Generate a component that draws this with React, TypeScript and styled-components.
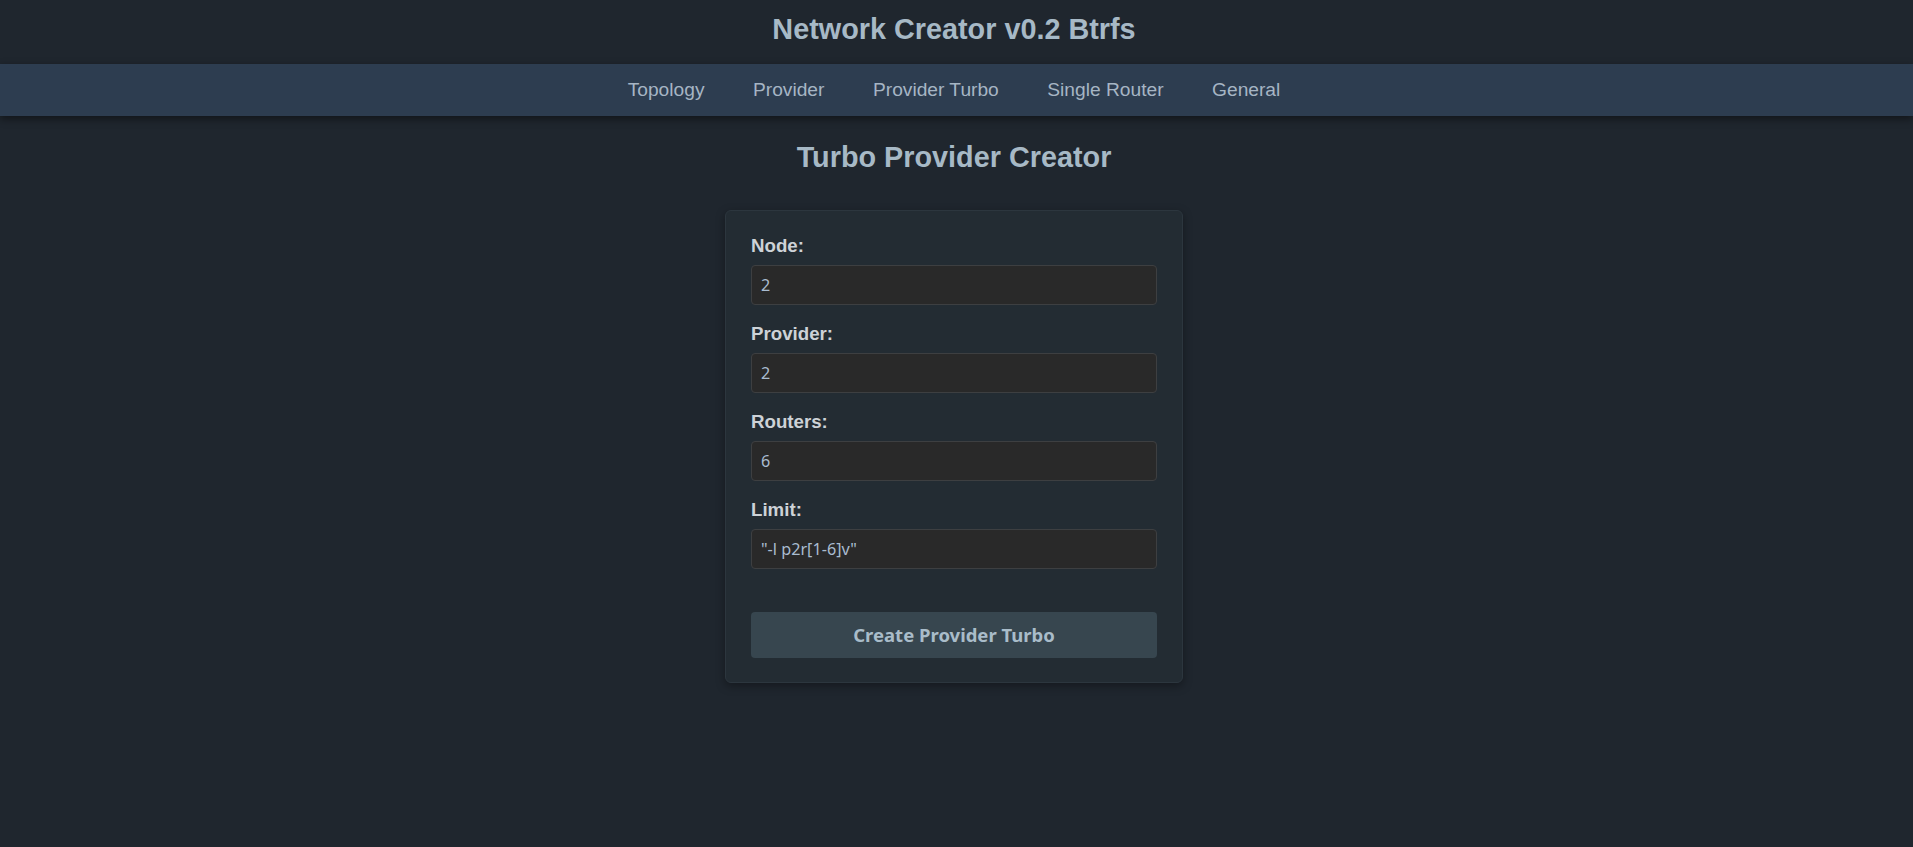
import React from 'react';
import styled, { createGlobalStyle } from 'styled-components';

const GlobalStyle = createGlobalStyle`
  html, body {
    margin: 0;
    padding: 0;
    background-color: #1f262e;
    min-height: 100%;
  }
  body {
    font-family: 'Liberation Sans', Arial, sans-serif;
    color: #a9b9c7;
  }
  * {
    box-sizing: border-box;
  }
`;

const navItems = ['Topology', 'Provider', 'Provider Turbo', 'Single Router', 'General'];

const fields = [
  { id: 'node', label: 'Node:', value: '2' },
  { id: 'provider', label: 'Provider:', value: '2' },
  { id: 'routers', label: 'Routers:', value: '6' },
  { id: 'limit', label: 'Limit:', value: '"-l p2r[1-6]v"' },
];

const App: React.FC = () => {
  return (
    <>
      <GlobalStyle />
      <Page>
        <Header>
          <Title>Network Creator v0.2 Btrfs</Title>
        </Header>
        <NavBar>
          {navItems.map((item) => (
            <NavLink key={item} href="#">
              {item}
            </NavLink>
          ))}
        </NavBar>
        <Main>
          <Heading>Turbo Provider Creator</Heading>
          <Card onSubmit={(e) => e.preventDefault()}>
            {fields.map((f) => (
              <FieldGroup key={f.id}>
                <Label htmlFor={f.id}>{f.label}</Label>
                <Input id={f.id} type="text" defaultValue={f.value} />
              </FieldGroup>
            ))}
            <SubmitButton type="submit">Create Provider Turbo</SubmitButton>
          </Card>
        </Main>
      </Page>
    </>
  );
};

const Page = styled.div`
  min-height: 847px;
  background-color: #1f262e;
`;

const Header = styled.header`
  height: 64px;
  padding-top: 13px;
  padding-right: 5px;
  display: flex;
  justify-content: center;
  align-items: flex-start;
`;

const Title = styled.h1`
  margin: 0;
  font-size: 28.8px;
  font-weight: 700;
  color: #a7b9c6;
`;

const NavBar = styled.nav`
  height: 52px;
  background-color: #2d3d50;
  display: flex;
  justify-content: center;
  align-items: center;
  gap: 48.5px;
  padding-right: 5px;
  box-shadow: 0 3px 8px rgba(0, 0, 0, 0.45);
  position: relative;
`;

const NavLink = styled.a`
  font-size: 19.2px;
  color: #a6b5c4;
  text-decoration: none;
  cursor: pointer;
  &:hover {
    color: #d0dbe5;
  }
`;

const Main = styled.main`
  display: flex;
  flex-direction: column;
  align-items: center;
  padding-top: 25px;
  padding-right: 5px;
`;

const Heading = styled.h2`
  margin: 0 0 36px;
  font-size: 28.8px;
  font-weight: 700;
  color: #a7b9c6;
`;

const Card = styled.form`
  width: 458px;
  padding: 24px 25px;
  background-color: #232c33;
  border: 1px solid #2c363e;
  border-radius: 6px;
  box-shadow: 0 3px 10px rgba(0, 0, 0, 0.35);
`;

const FieldGroup = styled.div`
  display: flex;
  flex-direction: column;
  margin-bottom: 18.5px;
`;

const Label = styled.label`
  font-size: 18.7px;
  line-height: 21.5px;
  font-weight: 700;
  color: #cdd2d7;
  margin-bottom: 8px;
`;

const Input = styled.input`
  width: 100%;
  height: 40px;
  padding: 0 9px;
  background-color: #292929;
  border: 1px solid #3d3f41;
  border-radius: 4px;
  font-family: 'Noto Sans', 'Open Sans', sans-serif;
  font-size: 16.2px;
  color: #a9bcd0;
  outline: none;
`;

const SubmitButton = styled.button`
  width: 100%;
  height: 45.5px;
  margin-top: 25px;
  background-color: #37464f;
  border: none;
  border-radius: 4px;
  font-family: 'Noto Sans', 'Open Sans', sans-serif;
  font-size: 18.5px;
  font-weight: 700;
  color: #a9bcc9;
  cursor: pointer;
  &:hover {
    background-color: #3f505a;
  }
`;

export default App;
